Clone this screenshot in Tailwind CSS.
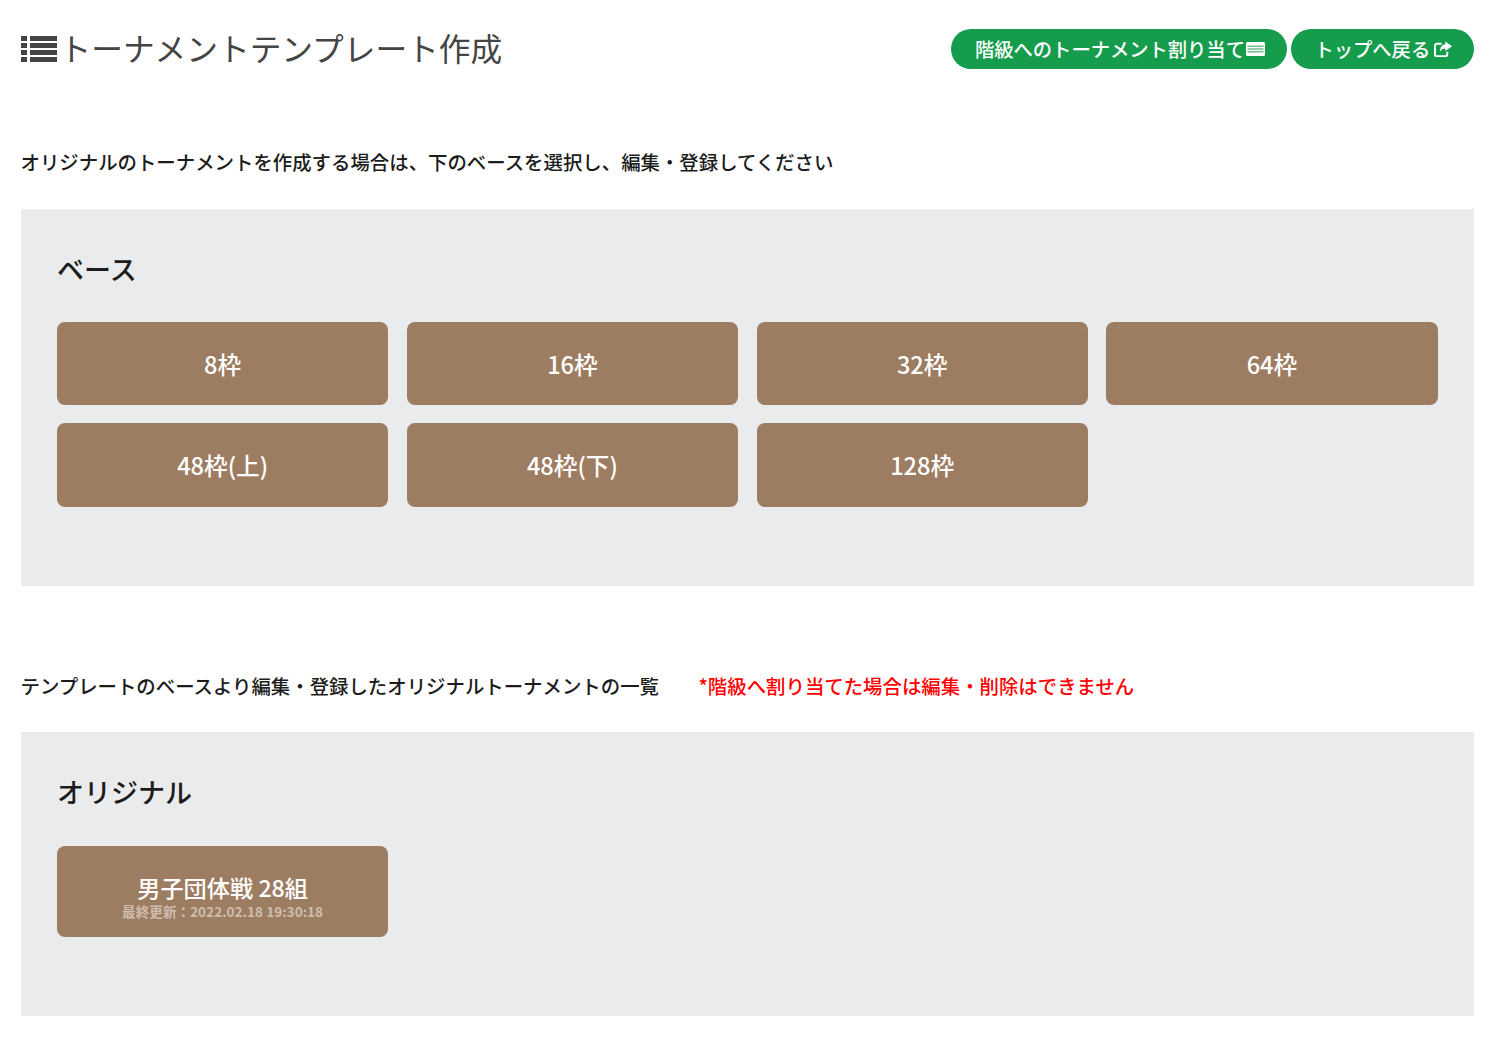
<!DOCTYPE html>
<html lang="ja"><head><meta charset="utf-8"><script src="https://cdn.jsdelivr.net/npm/@tailwindcss/browser@4"></script></head>
<body class="bg-white font-['Noto_Sans_CJK_JP','Noto_Sans',sans-serif]">
<div class="w-[1500px] h-[1042px] overflow-hidden pl-[20.500px] pr-[26px] pt-[29px]">
<header class="flex items-center justify-between h-[40px]">
  <h1 class="flex items-center gap-[3px] text-[31.700px] leading-[38px] font-normal text-[#444] -mt-[4px]">
    <svg class="w-[36px] h-[28px] mt-[4px]" viewBox="0 0 36 28" fill="#444"><path d="M0 1h6v5H0zM9 1h27v5H9zM0 8h6v5H0zM9 8h27v5H9zM0 15h6v5H0zM9 15h27v5H9zM0 22h6v5H0zM9 22h27v5H9z"/></svg>
    <span>トーナメントテンプレート作成</span>
  </h1>
  <div class="flex gap-[4px]">
    <a class="flex items-center h-[40px] w-[336px] pl-[24px] rounded-full bg-[#169c4d] text-white text-[19.300px] font-medium whitespace-nowrap">階級へのトーナメント割り当て<svg class="w-[19px] h-[14px] ml-[1px]" viewBox="0 0 19 14"><rect width="19" height="14" rx="1.500" fill="#fff"/><path d="M1.500 3.500h16v1.500h-16zM1.500 6.200h16v1.500h-16zM1.500 8.900h16v1.500h-16z" fill="#6fc08f"/></svg></a>
    <a class="flex items-center h-[40px] w-[183px] pl-[23.500px] rounded-full bg-[#169c4d] text-white text-[19.300px] font-medium whitespace-nowrap">トップへ戻る<svg class="w-[18px] h-[17px] ml-[4px]" viewBox="0 0 19 17" fill="none"><path d="M8 2.500H3a2 2 0 0 0-2 2v9a2 2 0 0 0 2 2h9a2 2 0 0 0 2-2v-2.500" stroke="#fff" stroke-width="2"/><path d="M12 0l7 5-7 5V7.500C9 7.500 7.500 8.500 6.500 11 6 6.500 8.500 3.500 12 3z" fill="#fff"/></svg></a>
  </div>
</header>

<p class="mt-[79px] text-[19.420px] leading-[28px] font-medium text-[#1c1c1c]">オリジナルのトーナメントを作成する場合は、下のベースを選択し、編集・登録してください</p>

<section class="mt-[33px] h-[377px] bg-[#e9ebed] px-[36.500px] pt-[41px]">
  <h2 class="text-[27px] leading-[38px] font-medium text-[#1c1c1c]">ベース</h2>
  <div class="mt-[34px] grid grid-cols-4 gap-x-[18.500px] gap-y-[18px]">
    <button class="h-[83px] pt-[2px] rounded-[8px] bg-[#9d7d61] text-white text-[23.600px] font-medium">8枠</button>
    <button class="h-[83px] pt-[2px] rounded-[8px] bg-[#9d7d61] text-white text-[23.600px] font-medium">16枠</button>
    <button class="h-[83px] pt-[2px] rounded-[8px] bg-[#9d7d61] text-white text-[23.600px] font-medium">32枠</button>
    <button class="h-[83px] pt-[2px] rounded-[8px] bg-[#9d7d61] text-white text-[23.600px] font-medium">64枠</button>
    <button class="h-[84px] pt-[2px] rounded-[8px] bg-[#9d7d61] text-white text-[23.600px] font-medium">48枠(上)</button>
    <button class="h-[84px] pt-[2px] rounded-[8px] bg-[#9d7d61] text-white text-[23.600px] font-medium">48枠(下)</button>
    <button class="h-[84px] pt-[2px] rounded-[8px] bg-[#9d7d61] text-white text-[23.600px] font-medium">128枠</button>
  </div>
</section>

<p class="mt-[86px] flex text-[19.420px] leading-[28px] font-medium text-[#1c1c1c]"><span>テンプレートのベースより編集・登録したオリジナルトーナメントの一覧</span><span class="ml-[39.500px] text-[#ff0000]">*階級へ割り当てた場合は編集・削除はできません</span></p>

<section class="mt-[32px] h-[284px] bg-[#e9ebed] px-[36.500px] pt-[41px]">
  <h2 class="text-[27px] leading-[38px] font-medium text-[#1c1c1c]">オリジナル</h2>
  <div class="mt-[35px] grid grid-cols-4 gap-x-[18.500px]">
    <button class="h-[91px] rounded-[8px] bg-[#9d7d61] text-white flex flex-col items-center justify-center pt-[14px]">
      <span class="text-[23.200px] leading-[25px] font-medium">男子団体戦 28組</span>
      <span class="text-[13.600px] leading-[22px] font-bold text-white/50">最終更新：2022.02.18 19:30:18</span>
    </button>
  </div>
</section>
</div>
</body></html>
